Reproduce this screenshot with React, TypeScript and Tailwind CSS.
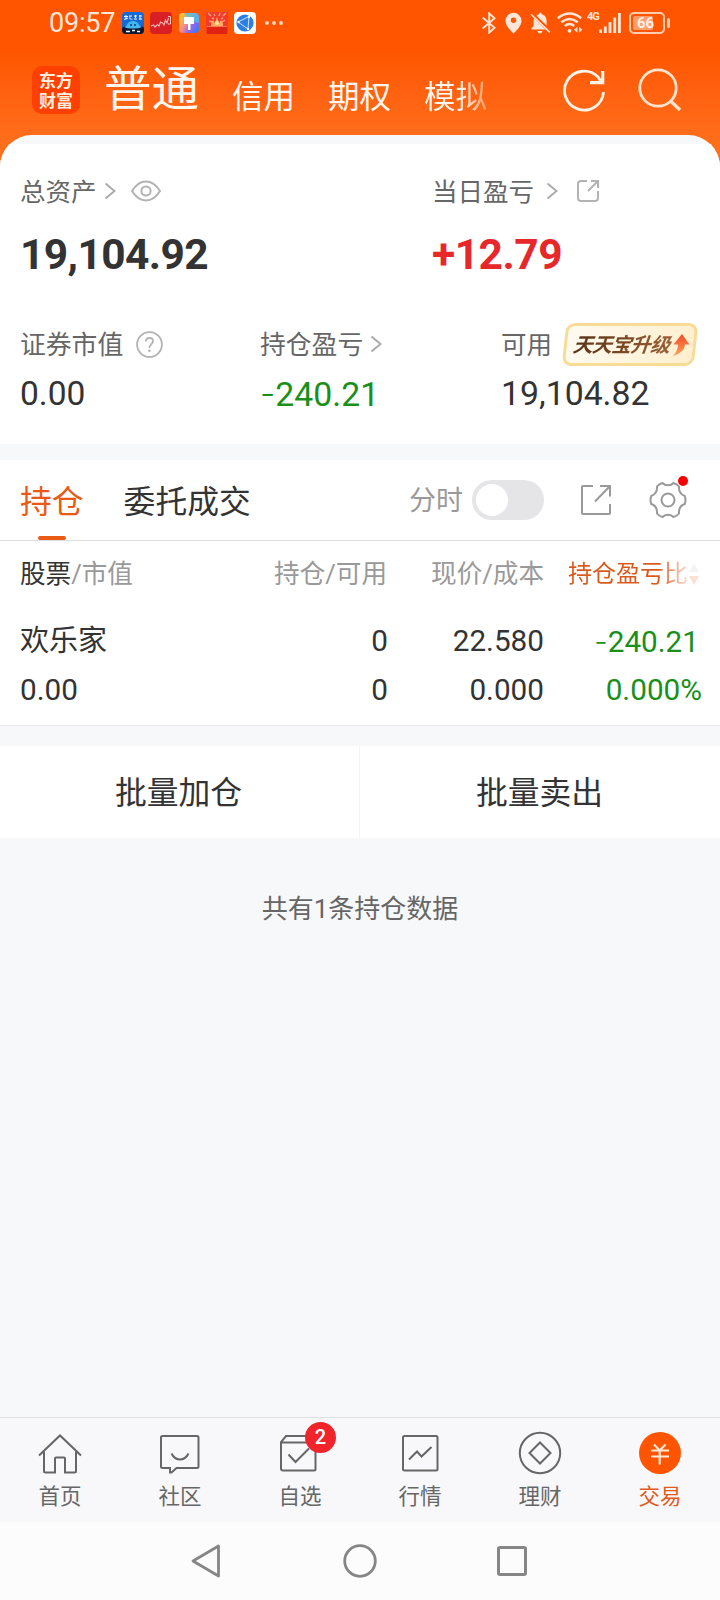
import { useState } from "react";
import type { ReactNode } from "react";

const font = "font-[Roboto,'Noto_Sans_CJK_SC',sans-serif]";

const Chevron = ({ className = "" }: { className?: string }) => (
  <svg className={`h-[18px] w-[12px] ${className}`} viewBox="0 0 12 18" fill="none" stroke="#a8a8a8" strokeWidth="1.8">
    <path d="M1.5 1.5L10.5 9L1.5 16.5" />
  </svg>
);

const Minus = () => <span className="font-[Inter] font-light">-</span>;

const StatusBar = () => (
  <div className="flex h-[45px] items-center pr-[50px] pl-[49px]">
    <span className="mt-[2px] text-[27px] leading-[45px] tracking-[-0.2px] text-[#ffe6d8]">09:57</span>
    <div className="ml-[7px] flex items-center">
      <svg className="h-[22px] w-[22px]" viewBox="0 0 22 22">
        <rect width="22" height="22" rx="4" fill="#1769d8" />
        <path d="M0 16L3 14L5 16H17L20 14L22 16V18Q22 22 18 22H4Q0 22 0 18Z" fill="#0b1733" />
        <path d="M2 4.5H6M4 3V7.5M2 7.5L6 6M7 4H10M8 4V7H10.500M12 4H15M12 7H15M13.500 3V6M17 4H20M18 3V8M20 7H17" stroke="#eaf6ff" strokeWidth="1" />
        <path d="M2 15Q5 14 6 11Q8 9 11 9Q14 9 16 11Q17 14 20 15Q16 17 11 16.500Q6 17 2 15Z" fill="#43b8ef" />
        <path d="M8 13H10M12 13H14" stroke="#0b3a7a" strokeWidth="1.3" />
        <path d="M4 19.500H8M10 18.500H13M15 19.500H18" stroke="#fff" strokeWidth="1.5" />
      </svg>
      <svg className="ml-[6px] h-[22px] w-[22px]" viewBox="0 0 22 22">
        <rect width="22" height="22" rx="4" fill="#d91f26" />
        <path d="M1 14L3.500 13L5 15L7.500 12.500L9 14L10.500 10L12.500 11L14 13L15.500 8L17 11L18.500 6" fill="none" stroke="#f8b5b1" strokeWidth="1.2" />
        <path d="M18 4.500H20.500V12H18" fill="none" stroke="#f8c9c5" strokeWidth="1" />
      </svg>
      <svg className="ml-[7px] h-[20px] w-[20px]" viewBox="0 0 20 20">
        <defs>
          <linearGradient id="brush" x1="0" y1="0.2" x2="1" y2="0.8">
            <stop offset="0" stopColor="#ffc928" />
            <stop offset="0.4" stopColor="#f58a87" />
            <stop offset="0.65" stopColor="#9b65ef" />
            <stop offset="1" stopColor="#347cf5" />
          </linearGradient>
        </defs>
        <rect width="20" height="20" rx="4" fill="url(#brush)" />
        <path d="M5 0H16Q20 0 20 4V10L10 7Z" fill="#46c9dc" opacity="0.75" />
        <path d="M5 4H15V11H11.500V17H9V11H5Z" fill="#fff" />
      </svg>
      <svg className="ml-[7px] h-[22px] w-[22px]" viewBox="0 0 22 22">
        <rect width="22" height="22" fill="#f23c2b" />
        <path d="M2 1L5 4M20 1L17 4M3 9L6 10M19 8L16 10M8 2L9 4M14 1L13 4M6 6L8 7M17 6L15 7" stroke="#ff9b77" strokeWidth="1.500" />
        <path d="M5 14Q5 10 7 8L9 11L11 5L13 11L15 8Q17 10 17 14Z" fill="#ffab60" />
        <circle cx="11" cy="11" r="2" fill="#ffe39a" />
        <path d="M1 14H21V22H1Z" fill="#df2413" />
        <path d="M1 14.5H21" stroke="#ff7756" />
      </svg>
      <svg className="ml-[6px] h-[22px] w-[22px]" viewBox="0 0 22 22">
        <rect width="22" height="22" rx="4" fill="#fff" />
        <circle cx="11" cy="11" r="8.6" fill="#2f7fe0" />
        <path d="M4 10L15 4.5L14 17Z" fill="none" stroke="#dcecff" strokeWidth="0.9" />
        <circle cx="4.5" cy="10" r="1.2" fill="#fff" />
        <circle cx="15" cy="4.8" r="1.2" fill="#fff" />
        <circle cx="14" cy="17" r="1.2" fill="#fff" />
      </svg>
      <svg className="ml-[9px] h-[4px] w-[18px]" viewBox="0 0 18 4" fill="#ffd9c4">
        <circle cx="2" cy="2" r="1.9" />
        <circle cx="9" cy="2" r="1.9" />
        <circle cx="16" cy="2" r="1.9" />
      </svg>
    </div>
    <div className="ml-auto flex items-center text-[#ffe6d8]">
      <svg className="h-[22px] w-[14px]" viewBox="0 0 14 22" fill="none" stroke="currentColor" strokeWidth="1.9">
        <path d="M0.7 5.5L12.5 15.8L7.2 20.6V1.4L12.5 6.2L0.7 16.5" />
      </svg>
      <svg className="ml-[9px] h-[22px] w-[17px]" viewBox="0 0 17 22" fill="currentColor">
        <path fillRule="evenodd" d="M8.5 0.8A8 8 0 0 1 16.5 8.8C16.5 14 11.5 18.5 8.5 21.6C5.5 18.5 0.5 14 0.5 8.8A8 8 0 0 1 8.5 0.8ZM8.5 5.6A2.7 2.7 0 1 0 8.5 11A2.7 2.7 0 1 0 8.5 5.6Z" />
      </svg>
      <svg className="ml-[8px] h-[22px] w-[21px]" viewBox="0 0 21 22" fill="currentColor">
        <path d="M7 3.2Q8.4 2.3 9 2.2Q9 0.6 10.3 0.6Q11.6 0.6 11.7 2.2Q16.6 3.4 16.6 9V13.6L6.4 3.7Z" />
        <path d="M4 6.3L15.5 17.6H1.4V16.4L3.6 14V9Q3.6 7.4 4 6.3Z" />
        <path d="M7.4 19H12.6Q12 21.4 10 21.4Q8 21.4 7.4 19Z" />
        <path d="M1 2.2L19.8 20.4" stroke="currentColor" strokeWidth="1.6" />
      </svg>
      <svg className="ml-[6px] h-[22px] w-[26px]" viewBox="0 0 26 22" fill="none" stroke="currentColor" strokeWidth="2.4">
        <path d="M0.8 6.2Q12.5 -3.2 24.2 6.2" />
        <path d="M4.2 10.2Q12.5 3.6 20.8 10.2" />
        <path d="M7.8 14Q12.5 10.2 17.2 14" />
        <circle cx="12.5" cy="18.8" r="1.9" fill="currentColor" stroke="none" />
        <path d="M20.4 14.8V20.8L17 17.8ZM22 14.8V20.8L25.4 17.8Z" fill="currentColor" stroke="none" />
      </svg>
      <span className="-mt-[12px] ml-[4px] w-[12px] text-[11px] leading-[12px] font-bold tracking-[-1px]">4G</span>
      <svg className="h-[22px] w-[22px]" viewBox="0 0 22 22" stroke="currentColor" strokeWidth="2.8">
        <path d="M1.6 17.5V21M6.3 14.5V21M11 10V21M15.7 5.5V21M20.4 1V21" />
      </svg>
      <div className="ml-[8px] flex h-[22px] w-[36px] items-center rounded-[5px] border-2 border-[#ffcdb2] p-[2px]">
        <div className="flex h-full w-[20px] rounded-[2px] bg-[#ff9d6b]">
          <span className="pl-[4px] text-[15px] leading-[15px] font-bold text-[#fff0e8]">66</span>
        </div>
      </div>
      <div className="ml-[2px] h-[10px] w-[3px] rounded-full bg-[#ffcdb2]" />
    </div>
  </div>
);

const Header = () => (
  <div className="flex h-[90px] pl-[32px] text-[#fff7ef]">
    <div className="mt-[21px] flex h-[48px] w-[48px] flex-col items-center gap-[4px] rounded-[10px] bg-[#ff4000] pt-[6px] font-['Noto_Sans_CJK_SC'] text-[17px] leading-[16px] font-bold text-[#ffeedd]">
      <span>东方</span>
      <span>财富</span>
    </div>
    <div className="flex w-[430px] items-start pl-[24px] whitespace-nowrap">
      <span className="mt-[15px] text-[47.5px] leading-[60px]">普通</span>
      <span className="mt-[33px] ml-[33px] text-[31.5px] leading-[40px]">信用</span>
      <span className="mt-[33px] ml-[33px] text-[31.5px] leading-[40px]">期权</span>
      <span className="mt-[33px] ml-[33px] bg-linear-to-r from-[#fff7ef] from-55% to-[#ff9b62] bg-clip-text text-[31.5px] leading-[40px] text-transparent">
        模拟
      </span>
    </div>
    <svg className="mt-[23px] ml-[52px] h-[44px] w-[44px]" viewBox="0 0 44 44" fill="none" stroke="#fff3e8" strokeWidth="2.8">
      <path d="M41.5 24A19.500 19.500 0 1 1 36 9L39 13.5" />
      <path d="M40.7 3V14.7H28" strokeWidth="3.2" />
    </svg>
    <svg className="mt-[23px] ml-[32px] h-[44px] w-[44px]" viewBox="0 0 44 44" fill="none" stroke="#ffe3cf" strokeWidth="2.8">
      <circle cx="20" cy="20" r="18.2" />
      <path d="M32.5 33L42 42" strokeWidth="3.4" />
    </svg>
  </div>
);

const UpgradeBadge = () => (
  <div className="ml-[12px] flex h-[43px] w-[132px] -skew-x-6 items-center rounded-[9px] border-[3px] border-[#f8dc96] bg-linear-to-r from-[#fffaf0] to-[#ffefcf] pl-[6px]">
    <span className="bg-linear-to-r from-[#5a3215] to-[#9a5f35] bg-clip-text pr-[2px] text-[20px] leading-[36px] font-bold tracking-[-0.7px] whitespace-nowrap text-transparent italic">
      天天宝升级
    </span>
    <svg className="-ml-[1px] h-[24px] w-[19px] shrink-0 skew-x-6" viewBox="0 0 19 24">
      <defs>
        <linearGradient id="up" x1="0" y1="0" x2="0" y2="1">
          <stop offset="0" stopColor="#f04a23" />
          <stop offset="1" stopColor="#ffa05c" />
        </linearGradient>
      </defs>
      <path d="M11 1L18.5 11.5H14Q14 19 2 23Q7.5 17 7 11.5H2.5Z" fill="url(#up)" />
    </svg>
  </div>
);

const Summary = () => (
  <div className="overflow-hidden rounded-t-[32px] bg-[#f7f8fa]">
    <div className="mt-[9px] h-[300px] bg-white pt-[27px] pl-[20px]">
      <div className="flex text-[#666]">
        <div className="w-[412px]">
          <div className="flex h-[40px] items-center text-[25.5px]">
            <span className="pt-[2px]">总资产</span>
            <Chevron className="ml-[7px]" />
            <svg className="ml-[14px] h-[22px] w-[32px]" viewBox="0 0 32 22" fill="none" stroke="#b3b3b3" strokeWidth="2">
              <path d="M2 11Q8 1.5 16 1.5T30 11Q24 20.5 16 20.5T2 11Z" />
              <circle cx="16" cy="11" r="4.6" />
            </svg>
          </div>
          <div className="mt-[19px] text-[42.5px] leading-[50px] font-bold tracking-[-0.6px] text-[#333]">19,104.92</div>
        </div>
        <div>
          <div className="flex h-[40px] items-center text-[25.5px]">
            <span className="pt-[2px]">当日盈亏</span>
            <Chevron className="ml-[12px]" />
            <svg className="ml-[18px] h-[24px] w-[24px]" viewBox="0 0 24 24" fill="none" stroke="#b3b3b3" strokeWidth="2">
              <path d="M11 2H5Q2 2 2 5V19Q2 22 5 22H19Q22 22 22 19V12" />
              <path d="M15 2H22V9M22 2L12 12" />
            </svg>
          </div>
          <div className="mt-[19px] text-[42.5px] leading-[50px] font-bold tracking-[-0.5px] text-[#e7282b]">+12.79</div>
        </div>
      </div>
      <div className="mt-[42px] flex text-[#666]">
        <div className="w-[240px]">
          <div className="flex h-[44px] items-center text-[25.8px]">
            <span className="pt-[2px]">证券市值</span>
            <svg className="ml-[13px] h-[27px] w-[27px]" viewBox="0 0 27 27" fill="none" stroke="#b3b3b3" strokeWidth="1.8">
              <circle cx="13.5" cy="13.5" r="12.4" />
              <path d="M9.8 10.6Q9.8 7 13.4 7T17 10.3Q17 12.2 15 13.6Q13.4 14.8 13.4 17" />
              <circle cx="13.4" cy="19.8" r="1.3" fill="#b3b3b3" stroke="none" />
            </svg>
          </div>
          <div className="mt-[8px] text-[33.5px] leading-[40px] text-[#333]">0.00</div>
        </div>
        <div className="w-[241px]">
          <div className="flex h-[44px] items-center text-[25.8px]">
            <span className="pt-[2px]">持仓盈亏</span>
            <Chevron className="ml-[7px]" />
          </div>
          <div className="mt-[8px] text-[33.8px] leading-[40px] text-[#1a8f1a]">
            <Minus />
            240.21
          </div>
        </div>
        <div>
          <div className="flex h-[44px] items-center text-[25.5px]">
            <span className="pt-[2px]">可用</span>
            <UpgradeBadge />
          </div>
          <div className="mt-[8px] text-[33.8px] leading-[40px] text-[#333]">19,104.82</div>
        </div>
      </div>
    </div>
  </div>
);

const Tabs = () => {
  const [minute, setMinute] = useState(false);

  return (
    <div className="mt-[16px] flex h-[81px] border-b border-[#dedede] bg-white pl-[20px]">
      <button className="relative h-[80px] pt-[2px] text-[31.8px] leading-[80px] text-[#ea5a14]">
        持仓
        <span className="absolute bottom-0 left-[18px] h-[4px] w-[28px] rounded-full bg-[#ea5a14]" />
      </button>
      <button className="ml-[40px] h-[80px] pt-[2px] text-[31.8px] leading-[80px] text-[#333]">委托成交</button>
      <div className="ml-auto flex items-center pr-[33px]">
        <span className="pt-[2px] text-[27px] text-[#999]">分时</span>
        <button
          role="switch"
          aria-checked={minute}
          onClick={() => setMinute(!minute)}
          className={`ml-[9px] flex h-[40px] w-[72px] items-center rounded-full bg-[#e5e5e7] p-[4px] ${minute ? "justify-end" : ""}`}
        >
          <span className="h-[32px] w-[32px] rounded-full bg-white" />
        </button>
        <svg className="ml-[36px] h-[32px] w-[32px]" viewBox="0 0 32 32" fill="none" stroke="#999" strokeWidth="2">
          <path d="M13 2H3Q2 2 2 3V29Q2 30 3 30H29Q30 30 30 29V20" />
          <path d="M20 2H30V12.5M30 2L15 17.5" />
        </svg>
        <div className="relative ml-[37px] h-[38px] w-[38px]">
          <svg className="h-[38px] w-[38px]" viewBox="0 0 38 38" fill="none" stroke="#999" strokeWidth="2" strokeLinejoin="round">
            <path d="M13.5 2Q15.5 4.200 19 4.200T24.500 2Q28 3 30 5.500Q29.500 13 35.800 15Q37.200 19 35.800 23Q29.500 25 30 32.500Q28 35 24.500 36Q22.500 33.800 19 33.800T13.500 36Q10 35 8 32.500Q8.500 25 2.200 23Q0.800 19 2.200 15Q8.500 13 8 5.500Q10 3 13.500 2Z" />
            <circle cx="19" cy="19" r="6.5" />
          </svg>
          <span className="absolute -top-[5px] left-[29px] h-[10px] w-[10px] rounded-full bg-[#f80000]" />
        </div>
      </div>
    </div>
  );
};

const Holdings = () => (
  <div className="h-[185px] border-b border-[#e9e9eb] bg-white pl-[20px]">
    <div className="grid h-[64px] grid-cols-[206px_161px_157px_1fr] items-center pt-[2px] text-[25.6px] text-[#999]">
      <div>
        <span className="text-[#333]">股票</span>/市值
      </div>
      <div className="text-right">持仓/可用</div>
      <div className="text-right">现价/成本</div>
      <div className="flex items-center pl-[24px] whitespace-nowrap">
        <span className="bg-linear-to-r from-[#d9591b] from-75% to-[#f9dfd2] bg-clip-text text-[24px] text-transparent">持仓盈亏比</span>
        <svg className="h-[24px] w-[12px]" viewBox="0 0 12 24">
          <path d="M6 1L11 10H1Z" fill="#f4f4f5" />
          <path d="M1 14H11L6 23Z" fill="#fbe0d6" />
        </svg>
      </div>
    </div>
    <div className="mt-[12px] grid grid-cols-[206px_162px_156px_155px] text-right text-[29.7px] leading-[48px] text-[#333]">
      <div className="pt-[1px] text-left text-[29px] leading-[47px]">欢乐家</div>
      <div>0</div>
      <div>22.580</div>
      <div className="text-[#1a8f1a]">
        <Minus />
        240.21
      </div>
      <div className="text-left">0.00</div>
      <div>0</div>
      <div>0.000</div>
      <div className="-mr-[3px] text-[#1a8f1a]">0.000%</div>
    </div>
  </div>
);

const BatchButtons = () => (
  <div className="mt-[20px] flex h-[92px] bg-white text-[31.8px] text-[#333]">
    <button className="w-[360px] border-r border-[#f3f3f4] pt-[3px] pr-[2px]">批量加仓</button>
    <button className="w-[360px] pt-[3px] pr-[1px]">批量卖出</button>
  </div>
);

const items: { label: string; icon: ReactNode; badge?: number; active?: boolean }[] = [
  {
    label: "首页",
    icon: (
      <>
        <path d="M1 21.5L22 1.5L43 21.5" />
        <path d="M6 17.5V37Q6 38.5 7.5 38.5H17V24.5Q17 23.5 18 23.5H26Q27 23.5 27 24.5V38.5H36.5Q38 38.5 38 37V17.5" />
      </>
    ),
  },
  {
    label: "社区",
    icon: (
      <>
        <path d="M4.5 2H39Q40.5 2 40.5 3.5V32.5Q40.5 34 39 34H18.5L13.5 38.5H12V34H4.5Q3 34 3 32.5V3.5Q3 2 4.5 2Z" />
        <path d="M13.5 19.5Q16.5 25.5 22 25.5T30.500 19.5" />
      </>
    ),
  },
  {
    label: "自选",
    badge: 2,
    icon: (
      <>
        <path d="M4 8.5H37.5V35Q37.5 36.5 36 36.5H5Q3 36.5 3 34.5V8L8 2H33L37.5 8" />
        <path d="M10.5 20.5L17.5 28L31 14.5" />
      </>
    ),
  },
  {
    label: "行情",
    icon: (
      <>
        <rect x="5" y="2" width="34.5" height="34.5" rx="1.5" />
        <path d="M11 25.5L19 17.5L23.5 22.5L33.5 13" />
      </>
    ),
  },
  {
    label: "理财",
    icon: (
      <>
        <circle cx="22" cy="19" r="20.2" />
        <path d="M22 8.5L32.5 19L22 29.5L11.5 19Z" />
      </>
    ),
  },
  {
    label: "交易",
    active: true,
    icon: (
      <>
        <circle cx="22" cy="19" r="21" fill="#ff5500" stroke="none" />
        <path d="M16 10.5L21.700 16.5L27.500 10.5M13 16.500H31M13 22.500H31M21.700 16.500V30.5" stroke="#ffe9d8" strokeWidth="2.2" />
      </>
    ),
  },
];

const BottomNav = () => (
  <nav className="grid h-[105px] grid-cols-6 border-t border-[#e0e0e2] bg-[#f8f8fa]">
    {items.map((item) => (
      <a key={item.label} className="relative flex flex-col items-center pt-[16px]">
        <svg className="h-[38px] w-[44px] overflow-visible" viewBox="0 0 44 38" fill="none" stroke="#666" strokeWidth="2">
          {item.icon}
        </svg>
        <span className={`mt-[10px] text-[21.5px] leading-[30px] ${item.active ? "text-[#e2591b]" : "text-[#666]"}`}>{item.label}</span>
        {item.badge && (
          <span className="absolute top-[4px] left-[65px] h-[31px] w-[31px] rounded-full bg-[#f0242a] text-center text-[20px] leading-[31px] font-medium text-white">
            {item.badge}
          </span>
        )}
      </a>
    ))}
  </nav>
);

const SystemNav = () => (
  <div className="flex h-[78px] bg-[#fcfcfc] pl-[190px]">
    <svg className="mt-[22px] h-[34px] w-[32px]" viewBox="0 0 32 34" fill="none" stroke="#868686" strokeWidth="2.8" strokeLinejoin="round">
      <path d="M28.500 2V32L3 17Z" />
    </svg>
    <svg className="mt-[22px] ml-[121px] h-[34px] w-[34px]" viewBox="0 0 34 34" fill="none" stroke="#868686" strokeWidth="2.8">
      <circle cx="17" cy="17" r="15.3" />
    </svg>
    <div className="mt-[24px] ml-[120px] h-[30px] w-[30px] rounded-[3px] border-3 border-[#868686]" />
  </div>
);

export default function App() {
  return (
    <div className={`flex h-[1600px] w-[720px] flex-col overflow-hidden bg-[#f7f8fa] ${font}`}>
      <div className="bg-linear-to-b from-[#ff5500] from-[50px] to-[#ff6e1b] to-[140px]">
        <StatusBar />
        <Header />
        <Summary />
      </div>
      <Tabs />
      <Holdings />
      <BatchButtons />
      <p className="mt-[53px] text-center text-[26px] leading-[36px] text-[#666]">共有1条持仓数据</p>
      <div className="flex-1" />
      <BottomNav />
      <SystemNav />
    </div>
  );
}
